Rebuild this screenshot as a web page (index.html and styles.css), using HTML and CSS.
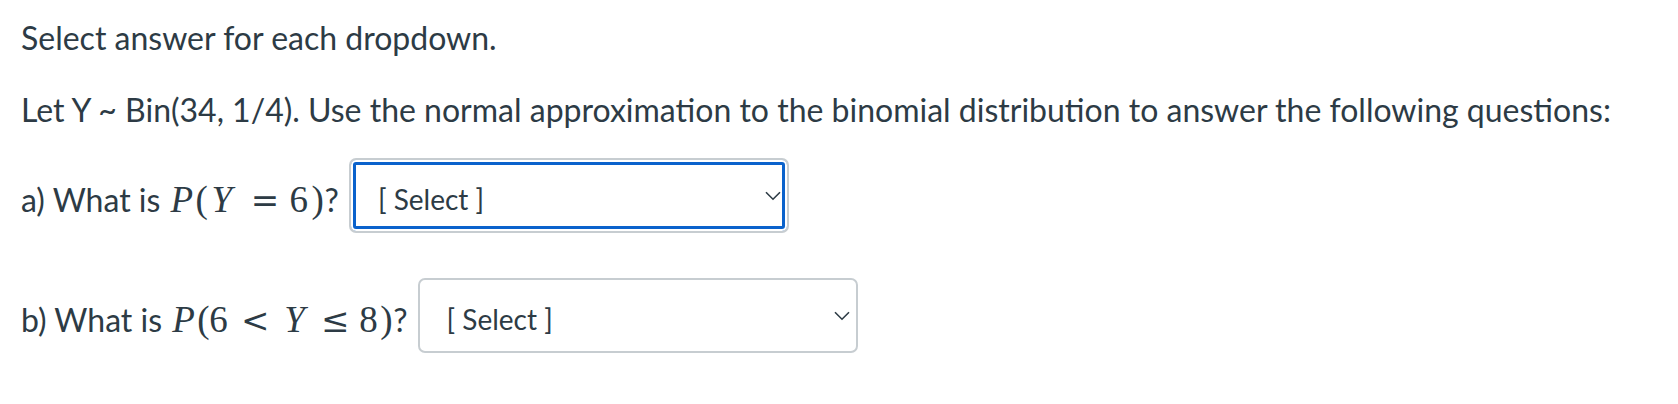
FILE: index.html
```html
<!DOCTYPE html>
<html lang="en">
<head>
<meta charset="utf-8">
<title>Quiz question</title>
<link rel="stylesheet" href="styles.css">
</head>
<body>
<div class="question">
  <p class="intro">Select answer for each dropdown.</p>
  <p class="stem">Let Y ~ Bin(34, 1/4). Use the normal approximation to the binomial distribution to answer the following questions:</p>
  <div class="row row-a">
    <span class="label">a) What is <span class="math"><span class="g mi w-p">P</span><span class="g w-lp">(</span><span class="g mi w-ya">Y</span><span class="g rel w-eq">=</span><span class="g w-6a">6</span><span class="g w-rp">)</span></span>?</span>
    <div class="select-wrap">
      <select class="select focused"><option>[ Select ]</option></select>
      <svg class="chev" width="16" height="10" viewBox="0 0 16 10"><path d="M1 1.2 L8 8.2 L15 1.2" fill="none" stroke="#2d3b45" stroke-width="1.6"/></svg>
    </div>
  </div>
  <div class="row row-b">
    <span class="label">b) What is <span class="math"><span class="g mi w-p">P</span><span class="g w-lp">(</span><span class="g w-6b">6</span><span class="g rel w-lt">&lt;</span><span class="g mi w-yb">Y</span><span class="g rel w-le">≤</span><span class="g w-8">8</span><span class="g w-rp">)</span></span>?</span>
    <div class="select-wrap">
      <select class="select"><option>[ Select ]</option></select>
      <svg class="chev" width="16" height="10" viewBox="0 0 16 10"><path d="M1 1.2 L8 8.2 L15 1.2" fill="none" stroke="#2d3b45" stroke-width="1.6"/></svg>
    </div>
  </div>
</div>
</body>
</html>
```

FILE: styles.css
```css
html, body {
  margin: 0;
  padding: 0;
  background: #ffffff;
}

body {
  font-family: Lato, "Liberation Sans", sans-serif;
  font-size: 32px;
  line-height: 48px;
  color: #2d3b45;
}

.question {
  padding: 14px 0 0 21px;
}

.intro,
.stem {
  margin: 0;
  white-space: nowrap;
}

.stem {
  margin-top: 24px;
}

.row {
  display: flex;
  align-items: flex-start;
}

.row-a {
  margin-top: 24px;
}

.row-b {
  margin-top: 45px;
}

.label {
  margin-top: 18px;
  margin-right: 10px;
  white-space: nowrap;
}

/* typeset math */
.math {
  font-family: "Liberation Serif", "DejaVu Serif", serif;
  font-size: 37px;
  line-height: 1;
  margin-left: 2px;
}

.g {
  display: inline-block;
  box-sizing: border-box;
  line-height: 1;
}

.mi {
  font-style: italic;
}

.rel {
  text-align: center;
  font-family: "DejaVu Serif", "Liberation Serif", serif;
  font-size: 34px;
}

.w-p { width: 25px; }
.w-lp { width: 11px; }
.w-ya { width: 34px; padding-left: 5px; }
.w-eq { width: 49px; }
.w-6a { width: 22px; }
.w-rp { width: 13px; }

.w-6b { width: 22px; padding-left: 1px; }
.w-lt { width: 50px; }
.w-yb { width: 32px; padding-left: 4px; }
.w-le { width: 46px; }
.w-8 { width: 22px; padding-left: 1px; }

/* dropdowns */
.select-wrap {
  position: relative;
  width: 440px;
  height: 75px;
}

.select {
  -webkit-appearance: none;
  appearance: none;
  box-sizing: border-box;
  width: 100%;
  height: 100%;
  margin: 0;
  padding: 6px 40px 0 27px;
  border: 2px solid #c7cdd1;
  border-radius: 7px;
  background: #ffffff;
  font-family: Lato, "Liberation Sans", sans-serif;
  font-size: 28px;
  color: #2d3b45;
  outline: none;
}

.select.focused {
  box-shadow: inset 0 0 0 2px #ffffff, inset 0 0 0 5px #0a62cc;
}

.chev {
  position: absolute;
  right: 8px;
  top: 33px;
  pointer-events: none;
}
```
